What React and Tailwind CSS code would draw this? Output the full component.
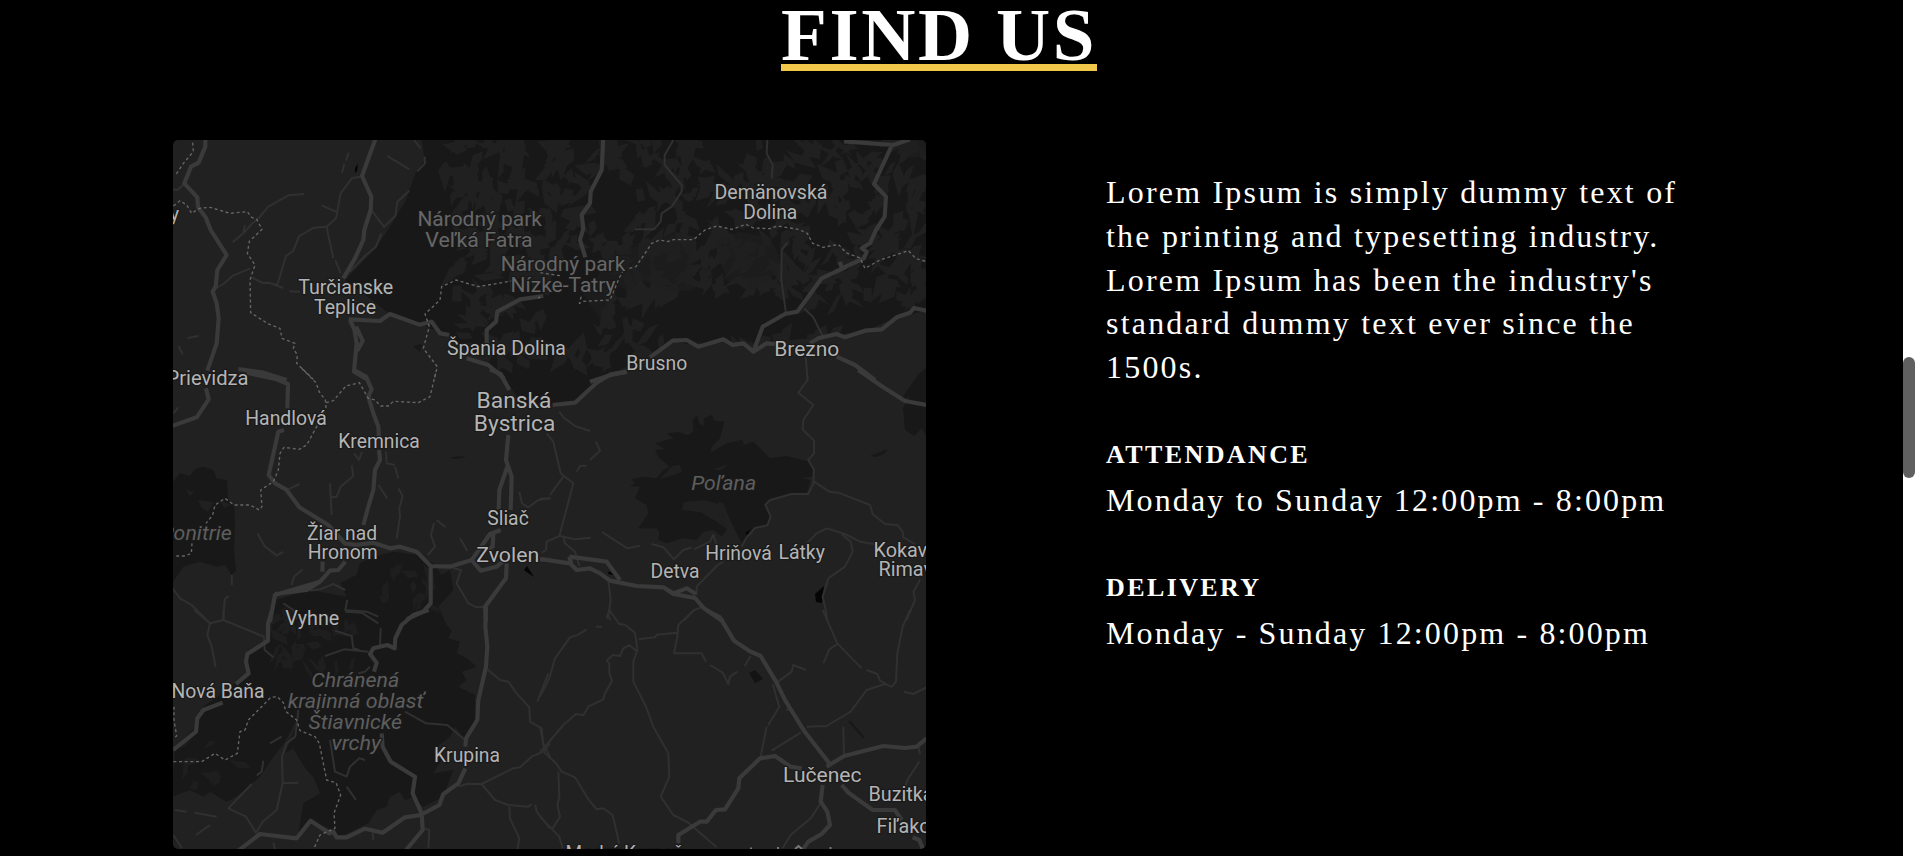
const SERIF = "font-['Liberation_Serif',serif]";

// Each tile is a 3x drawing grid placed at its own map origin.
const TILES = [
  {
    x: 160,
    y: 130,
    major: [
      "M136 20L136 50L116 98L93 110L73 160L112 202L114 232L137 262L152 300L200 375L172 420L167 470L158 485L170 520L176 565L170 640L142 722",
      "M647 25L606 138L634 200L632 240L613 300L610 330L585 385L550 445",
      "M1150 498L1080 508L1012 545L1008 575L980 600L980 640",
      "M566 568L660 573L690 552L778 584L815 575L840 610L868 615",
      "M570 570L583 598L590 640L582 725L622 748M588 590L608 632L592 662",
      "M920 685L985 705L1032 745",
      "M235 717L310 728L380 750",
    ],
    minor: [
      "M600 140L575 145L542 190L528 265L500 290L462 293L418 318L400 362L378 378L352 465L325 458L308 459L275 442",
      "M158 480L190 462L220 436L270 416",
      "M432 192L385 196L325 230L300 260L272 285L255 305L218 337M255 285L250 310",
      "M485 226L528 245M500 290L508 330L520 385M526 390L542 430",
      "M634 240L672 290L706 258L712 215L748 182M664 310L648 350L618 375L570 425",
      "M682 78L748 118M762 30L782 55M794 80L795 100L772 124M566 68L558 92M553 102L546 128",
      "M38 178L52 180L72 163M82 625L116 617M56 648L68 674M388 484L420 485M340 464L370 474",
    ],
    border: [
      "M98 38L100 65L72 98L46 136",
      "M40 228L60 212L80 225L95 250L118 235L150 232L210 250L262 245L275 262L290 268L306 298L268 334L262 370L285 405L270 450L272 548L325 582L360 595L366 625L405 640L400 655L412 675L410 700L460 748",
      "M1060 452L955 470L888 450L845 470L840 510L795 552L808 590L790 655L832 710L822 750",
    ],
  },
  {
    x: 540,
    y: 130,
    major: [
      "M190 20L185 120L152 185L150 220L125 255L130 295L120 330L136 382",
      "M912 34L1060 45L1110 28M1056 45L1002 162L1038 200L1034 260L1008 300L990 340L965 355L980 365L972 385L905 415L900 395M920 410L845 445L805 500L772 545L735 552L668 590L640 665",
      "M150 755L220 733L260 726M330 682L398 632L440 630L475 650L550 628L578 645L610 640L640 665L680 640L708 642",
      "M810 640L835 625L890 612L915 622L975 602L1025 598L1070 562L1110 548L1122 534L1160 542",
      "M890 680L945 705L1005 750",
    ],
    minor: [
      "M400 30L374 75L374 105L425 165L425 185L395 230L365 250L362 275L342 298L284 298",
      "M682 30L680 70L698 105L695 145",
      "M742 338L725 360L724 450L738 550M792 535L820 562L848 618M797 680L803 750",
    ],
    border: [
      "M-5 505L0 500M60 437L0 428M268 415L288 410L335 340L360 330L382 335L400 329L460 329L495 300L530 288L575 298L618 283L640 294L690 296L712 288L775 298L802 310L818 340L850 352L895 343L918 368L960 384L975 415L1020 390L1105 362L1128 386L1160 395",
      "M250 420L235 450L210 510L130 514L118 520L125 495",
    ],
  },
  {
    x: 160,
    y: 370,
    major: [
      "M260 8L350 28L384 42L382 115M372 180L355 185L326 315L345 340L378 358L418 412L505 465L555 520L590 525",
      "M138 55L146 88L110 142L36 168",
      "M582 0L618 20L635 58L625 80L640 130L655 170L657 205M657 240L660 270L645 300L640 360L625 410L610 465",
      "M990 -2L1022 12L1048 60M1045 195L1038 270L1055 320L1052 420M1042 290L1018 360L1016 418",
      "M590 525L640 518L690 535L720 530L770 545L812 588L870 590L935 570M812 588L812 700L790 725L740 748",
      "M1022 480L990 492L935 570L962 602L1010 590L1028 575M1000 490L998 530L980 540M1040 580L1038 625L975 710L978 755",
      "M556 575L535 600L510 602L480 635L345 675L330 755M345 672L440 660L480 635M488 575L487 605",
      "M1140 568L1172 570",
    ],
    minor: [
      "M582 250L597 270L606 245M678 245L680 280L705 285M705 290L715 325M575 285L580 318L542 350L530 380L512 382M510 340L515 435",
      "M655 345L682 385M715 355L728 378L718 415L720 440L710 505M385 358L418 342M292 490L315 530L350 556L370 546",
      "M822 460L813 495L825 530L803 555M830 450L857 472M900 505L922 543M1078 365L1086 400L1105 412L1135 390L1170 385",
      "M428 598L402 620L395 645M880 595L903 600L890 640L925 700L950 712L978 710",
      "M450 662L480 658L520 642L556 660M562 690L556 720L620 725L655 740M370 700L400 720L410 748M215 615L216 645M206 678L194 688L190 750M38 655L60 685L95 705L145 755M40 130L55 112",
    ],
    border: [
      "M425 -5L468 38L478 66L496 90L498 112L470 170L440 225L418 238L372 232L360 250L355 300L340 335L302 360L306 410L298 420L270 405L222 405L195 385L165 405L158 435L138 460",
      "M498 98L520 92L558 48L598 38L625 85L645 90L662 108L685 108L700 94L775 98L810 80L828 5",
      "M96 520L94 550L75 558L42 558",
    ],
  },
  {
    x: 540,
    y: 370,
    major: [
      "M260 5L210 14L170 38L105 98L38 105",
      "M955 0L1030 52L1095 93L1160 105",
      "M0 567L90 580L110 600L150 595L180 610L210 632L290 648L370 652L400 672L465 684L492 715L550 755M88 560L200 575L240 630M88 560L95 585M370 652L400 670L440 655L468 672",
    ],
    minor: [
      "M800 0L803 30L775 68L820 105L790 150L788 178L822 212L822 250L805 270L822 300L820 340L805 372L755 372L690 390L676 404L692 440L682 466L645 474L618 505L605 530",
      "M822 335L868 365L895 368L990 405L998 432L1035 462L1072 465L1088 485L1090 502L1125 522",
      "M800 520L830 490L860 475L915 492L960 515L1002 522M905 492L932 515L938 545L915 590L865 625L848 680L855 710L862 750",
      "M20 190L40 215L62 310L100 340L58 498L20 515L18 540L5 548M70 320L30 375M0 386L32 385M70 500L75 520L105 545L118 588M60 498L105 508L152 503",
      "M58 125L70 142L105 168L150 183M168 215L180 242L150 270M140 287L120 288L110 305",
      "M186 486L262 535L300 527M335 522L370 532L402 568L430 540L455 532M462 538L510 515L520 495L530 525M550 575L530 588L470 650L470 675",
      "M205 630L212 690L205 740L212 750M485 712L462 720L432 752M1140 630L1120 665L1125 690L1100 750",
    ],
    border: [],
  },
  {
    x: 160,
    y: 610,
    major: [
      "M336 0L324 42L324 92L262 132L258 155L266 190L228 222M188 278L130 300L112 325L108 365L40 420",
      "M978 -10L976 50L982 110L978 170L955 270L952 330L918 385L916 410M916 475L895 520L850 552L838 585L782 615L735 622L668 668L615 656L560 682L530 682L520 665L508 670L452 632L410 685L300 672L235 722",
      "M806 0L760 15L725 45L706 85L704 115L682 105L640 115L630 132L650 158L642 185",
      "M665 370L668 410L692 455L765 500L758 550L785 610L788 660L738 720",
    ],
    minor: [
      "M103 0L150 40L190 30L312 80L314 120L340 142M190 0L190 30M150 40L142 75L155 110L167 172",
      "M982 178L1020 210L1045 215L1070 250L1108 292L1110 335L1145 355L1150 400L1170 440M1170 250M1165 190L1132 275",
      "M1170 400L1150 425L1115 440L1080 472L1060 475L965 522L920 522L895 530M965 522L1005 570L1045 585L1105 590L1115 582M1048 590L1050 625L1078 685L1072 718M1126 584L1130 605L1170 655",
      "M735 305L798 340L862 345L915 390M415 300L406 380L380 400L366 440L368 520L350 600L308 635L288 668L258 620L205 595L275 522M368 520L415 518",
      "M310 452L305 485L290 496M330 400L365 380M45 600L80 605M104 608L170 620M150 645L108 675M40 675L66 715M340 698L345 718M638 668L640 690M790 655L808 660L805 715",
      "M495 138L552 118L625 125M525 62L575 78L580 115L598 120M662 55L660 105M556 5L605 8L655 40M595 190L615 185L630 170M510 390L525 485L560 500L570 470L598 445L615 450M560 530L588 570",
    ],
    border: [
      "M42 290L42 330L50 378L40 385M40 455L125 455L165 430L195 450L232 430L240 365L255 360L265 330L320 275L332 262L352 260L370 278L378 305L410 330L420 362L465 380L478 400L500 510L528 518L542 555L522 610L525 655L480 675L462 715",
    ],
  },
  {
    x: 540,
    y: 610,
    major: [
      "M498 0L540 22L582 92L632 125L662 138L708 215L735 270L792 362L872 465",
      "M860 470L912 438L1030 408L1095 414L1130 410L1160 385",
      "M415 700L415 675L480 635L500 635L528 600L555 598L595 535L598 505L660 445L705 438L752 470L785 476",
      "M848 525L842 575L862 605L870 645L845 672L805 695L788 720M905 525L925 548L998 600L1065 600L1085 630M1118 682L1138 690L1148 715",
    ],
    minor: [
      "M200 25L208 0L238 42L255 44L285 68L292 120L280 155L280 215L318 290L340 350L385 430L388 500L362 560L400 615L445 638L530 712",
      "M292 125L268 105L250 115L240 138L218 135L200 152L208 160L208 190L216 212L195 250L190 268L145 290L130 316L108 312L70 345L15 410L0 425",
      "M140 58L115 74L90 82L45 145L28 205L0 260M168 50L186 50M295 88L345 82L350 74L412 68",
      "M462 0L415 45L412 80L402 130L485 130L498 155M510 165L548 188L565 222L570 200L592 185M632 138L614 168",
      "M710 218L755 185L760 165L798 180M698 222L718 290L685 345M680 350L662 440M738 300L755 298M782 368L695 422M800 350L860 348L932 305L980 240L1035 222L1055 230L1068 215L1072 130L1088 50L1110 0",
      "M848 0L892 100L965 175M892 102L868 118L850 160M980 180L1012 192L1020 212L1038 222M1092 245L1120 252L1160 232M910 350L912 438M1135 410L1140 432M1138 455L1105 505L1095 530",
      "M0 350L15 430L48 460L65 485L105 502L145 568L170 598L190 595L218 615L238 702M55 485L58 560L52 585L60 620L38 655M0 620L58 680L68 715",
      "M840 582L812 625L752 675L728 715",
    ],
    border: [],
  },
];

const NORTH =
  "M421 138L425 160L415 174L406 200L393 222L376 248L345 280L372 300L392 316L423 325L450 338L487 362L508 383L520 402L553 405L576 402L600 378L650 357L673 341L698 346L723 340L753 351L780 341L820 337L865 331L895 318L928 310L928 138Z";
const POLANA =
  "M458 150L470 135L478 160L490 170L492 145L515 135L525 152L553 155L540 205L515 230L512 248L560 220L605 210L612 222L590 232L640 215L690 265L740 258L810 275L820 295L815 320L785 325L812 330L800 370L755 370L690 390L675 405L690 440L680 465L640 475L620 500L605 520L590 490L570 450L550 400L535 395L548 440L560 480L545 500L520 480L490 485L470 510L430 505L380 520L355 510L358 485L350 475L295 475L325 430L320 405L285 385L300 350L270 348L285 340L275 328L310 320L350 325L370 300L390 290L355 262L345 240L375 238L345 220L400 205L380 190L415 186L445 195L460 185Z";
const SOUTH =
  "M345 -30L330 90L265 130L260 190L200 240L130 290L110 350L45 410L36 560L90 540L130 560L150 545L200 575L230 560L300 500L340 440L372 400L405 340L420 310L400 370L375 430L400 415L420 450L440 480L460 500L480 550L430 580L415 670L450 630L520 660L540 680L625 640L650 600L680 590L690 560L720 545L735 570L760 560L790 590L850 560L880 480L820 490L850 440L830 410L870 380L885 350L912 385L945 330L945 255L895 230L920 210L905 185L950 170L920 145L890 130L900 95L865 85L875 60L860 45L835 -10L880 -60L870 -120L845 -105L820 -140L770 -165L700 -175L640 -160L600 -140L590 -105L540 -80L560 -40L450 -60Z";
const PONITRIE =
  "M60 310L90 318L105 298L130 290L160 300L170 325L200 330L205 390L222 410L225 450L222 545L228 600L215 615L195 585L170 590L120 575L70 590L36 640L36 340Z";

// Small deterministic generator for the relief facets inside the forests.
function facets(count, seed, x0, y0, w, h, size, skip) {
  let s = seed;
  const rnd = () => {
    s = (s * 1664525 + 1013904223) % 4294967296;
    return s / 4294967296;
  };
  let d = "";
  for (let i = 0; i < count; i++) {
    const x = x0 + rnd() * w;
    const y = y0 + rnd() * h;
    const a = (rnd() > 0.4 ? -1.05 : 0.65) + (rnd() - 0.5) * 1.1;
    const len = (6 + rnd() * 9) * size;
    const wid = (2.5 + rnd() * 4.5) * size;
    const k = rnd() - 0.5;
    if (skip(x, y)) continue;
    const c = Math.cos(a);
    const n = Math.sin(a);
    const p = (u, v) => (x + u * c - v * n).toFixed(1) + " " + (y + u * n + v * c).toFixed(1);
    d += `M${p(-len, 0)}L${p(len * k, wid)}L${p(len, k * 4)}L${p(len * 0.4, -wid)}L${p(-len * 0.3, -wid * 0.5)}Z`;
  }
  return d;
}

const inOval = (x, y, cx, cy, rx, ry) => ((x - cx) / rx) ** 2 + ((y - cy) / ry) ** 2 < 1;
const NORTH_FACETS = facets(760, 11, 440, 138, 486, 225, 1.15, (x, y) =>
  x < 440 + (y - 138) * 0.05 ||
  inOval(x, y, 712, 322, 75, 26) ||
  inOval(x, y, 612, 205, 26, 34) ||
  inOval(x, y, 575, 300, 30, 46) ||
  inOval(x, y, 725, 150, 26, 22) ||
  inOval(x, y, 850, 320, 70, 16) ||
  (x < 450 && y > 235)
);
const SOUTH_FACETS =
  facets(32, 5, 265, 610, 90, 60, 0.9, () => false) +
  facets(10, 7, 180, 740, 60, 50, 0.8, () => false) +
  facets(14, 9, 380, 570, 55, 40, 0.8, () => false);

const LABELS = [
  ["y", 179, 221.4, 19.8, 0, "end"],
  ["Turčianske", 345.7, 294, 19.8, 95],
  ["Teplice", 345, 313.7, 19.8, 62],
  ["Demänovská", 771, 199.4, 19.8, 113],
  ["Dolina", 770.3, 219, 19.8, 54],
  ["Špania Dolina", 506.5, 355, 19.8, 119],
  ["Brusno", 656.7, 369.6, 19.8, 61],
  ["Brezno", 806.7, 356.2, 21, 65],
  ["Prievidza", 248.5, 384.6, 20, 82, "end"],
  ["Handlová", 286, 424.6, 19.8, 81.5],
  ["Kremnica", 379, 448.2, 19.8, 81.5],
  ["Banská", 514, 408.2, 22.5, 75],
  ["Bystrica", 514.5, 431.2, 22.5, 81.5],
  ["Sliač", 508, 525.4, 19.8, 41.5],
  ["Zvolen", 507.7, 562.4, 20.8, 63],
  ["Žiar nad", 342, 539.6, 19.8, 70],
  ["Hronom", 342.7, 559.2, 19.8, 70],
  ["Hriňová", 738.5, 559.6, 19.8, 66.5],
  ["Látky", 801.7, 558.6, 19.8, 46.5],
  ["Detva", 675, 577.6, 19.8, 49],
  ["Kokava", 873.5, 557, 19.8, 0, "start"],
  ["Rimavicou", 878.5, 576.4, 19.8, 0, "start"],
  ["Vyhne", 312.3, 625.4, 19.8, 54],
  ["Nová Baňa", 218, 698.4, 19.8, 93],
  ["Krupina", 467, 761.6, 19.8, 66],
  ["Lučenec", 822.3, 782, 21, 78.5],
  ["Buzitka", 868.5, 800.8, 19.8, 0, "start"],
  ["Fiľakovo", 876.5, 833.4, 19.8, 0, "start"],
  ["Modrý Kameň", 565.5, 860, 19.5, 118, "start"],
];

const PARKS = [
  ["Národný park", 479.7, 225.8, 20.2, 124.5],
  ["Veľká Fatra", 479, 247, 20.2, 107.5],
  ["Národný park", 563, 271, 20.2, 124.5],
  ["Nízke-Tatry", 563, 292, 20.2, 105],
];

const RESERVES = [
  ["Ponitrie", 231.7, 539.7, 20, 71, "end"],
  ["Poľana", 723.7, 490.4, 20, 65],
  ["Chránená", 355.3, 687.3, 20.5, 88],
  ["krajinná oblasť", 355.7, 708.3, 20.5, 136],
  ["Štiavnické", 355.3, 729.3, 20.5, 93.5],
  ["vrchy", 356.3, 750.3, 20.5, 49.5],
];

function Labels({ items, className }) {
  return (
    <g className={className} stroke="#1a1a1a" strokeWidth="2.5" strokeLinejoin="round" paintOrder="stroke">
      {items.map(([text, x, y, size, width, anchor = "middle"]) => (
        <text
          key={text + y}
          x={x}
          y={y}
          fontSize={size}
          textAnchor={anchor}
          textLength={width || undefined}
          lengthAdjust="spacingAndGlyphs"
        >
          {text}
        </text>
      ))}
    </g>
  );
}

function RegionMap() {
  return (
    <svg viewBox="173 140 753 709" className="block h-[709px] w-[753px] shrink-0 rounded-[5px] bg-[#212121] font-[Roboto,sans-serif]">
      <defs>
        <clipPath id="north">
          <path d={NORTH} />
        </clipPath>
        <clipPath id="south">
          <path d={SOUTH} transform="translate(160 610) scale(.33333)" />
        </clipPath>
      </defs>
      <g fill="#181818">
        <path d={NORTH} />
        <path d="M928 366L918 375L906 392L901 400L910 396L903 408L905 430L914 436L922 428L928 439Z" />
        <path d={POLANA} transform="translate(540 370) scale(.33333)" />
        <path d={PONITRIE} transform="translate(160 370) scale(.33333)" />
        <path d={SOUTH} transform="translate(160 610) scale(.33333)" />
        <path d="M870 456L880 452L888 449L884 454L876 457ZM449 458L458 456L466 457L456 459ZM413 346L422 344L420 352Z" />
        <path d="M849 721L857 730L864 738L858 731Z" stroke="#181818" strokeWidth="2" />
      </g>
      <g fill="#202020">
        <path d={NORTH_FACETS} clipPath="url(#north)" />
        <path
          d="M583 292L598 276L612 254L640 245L680 232L694 240L690 270L695 290L672 292L660 286L640 280L628 292L618 285L610 300L600 318L590 305ZM714 240L740 232L770 238L782 262L770 280L752 290L738 276L728 282L720 262ZM899 144L926 140L926 156L912 158L900 152Z"
          opacity=".6"
        />
        <path d={SOUTH_FACETS} clipPath="url(#south)" opacity=".8" />
        <path d="M660 479L672 466L680 465L682 472L670 476ZM684 502L705 500L722 505L728 530L714 520L700 512L682 510ZM712 470L728 464L722 470Z" />
        <path d="M186 490L194 492L190 496ZM198 500L214 502L208 512L202 508ZM220 500L231 505L224 508Z" />
      </g>
      <g fill="#050505">
        <path d="M355 168L358 164L357 171L355 173ZM524 570L527 566L534 577L528 573ZM815 594L824 586L822 603L816 602ZM745 533L751 529L747 535ZM609 571L614 575L608 574Z" />
        <path d="M749 673L755 670L763 679L755 683Z" fill="#131313" />
      </g>
      {TILES.map((t) => (
        <g key={`${t.x}-${t.y}`} transform={`translate(${t.x} ${t.y}) scale(.33333)`} fill="none" strokeLinejoin="round">
          <path d={t.minor.join("")} stroke="#303030" strokeWidth="6" />
          <path d={t.major.join("")} stroke="#3a3a3a" strokeWidth="12.5" />
          <path d={t.border.join("")} stroke="#666" strokeWidth="4" strokeDasharray="9 8" />
        </g>
      ))}
      <path d="M795 849L798.500 846L802 849M751 849V847.500M778 849V847M830.500 849V847" fill="none" stroke="#777" strokeWidth="2" />
      <Labels items={PARKS} className="fill-[#676767]" />
      <Labels items={RESERVES} className="fill-[#5e5e5e] italic" />
      <Labels items={LABELS} className="fill-[#b4b4b4]" />
    </svg>
  );
}

function Hours({ title, children }) {
  return (
    <div>
      <h2 className="text-[26px] leading-[31px] font-bold tracking-[2.4px]">{title}</h2>
      <p className="mt-[8px] leading-[44px] tracking-[2.14px]">{children}</p>
    </div>
  );
}

export default function App() {
  return (
    <div className="flex h-[856px] w-full overflow-hidden bg-black">
      <main className={`flex flex-1 flex-col text-white ${SERIF}`}>
        <header className="flex h-[140px] shrink-0 pl-[781px]">
          <h1 className="h-[71px] w-[316px] border-b-[7px] border-[#f2c84b] text-[75px] leading-[69px] font-bold tracking-[2.6px] whitespace-nowrap">
            FIND US
          </h1>
        </header>
        <section className="flex pl-[173px]">
          <RegionMap />
          <div className="ml-[180px] flex w-[600px] flex-col pt-[31px] text-[32px] tracking-[2.2px]">
            <p className="leading-[43.750px]">
              Lorem Ipsum is simply dummy text of
              <br />
              the printing and typesetting industry.
              <br />
              Lorem Ipsum has been the industry's
              <br />
              standard dummy text ever since the
              <br />
              1500s.
            </p>
            <div className="mt-[49px] flex flex-col gap-[50px]">
              <Hours title="ATTENDANCE">Monday to Sunday 12:00pm - 8:00pm</Hours>
              <Hours title="DELIVERY">Monday - Sunday 12:00pm - 8:00pm</Hours>
            </div>
          </div>
        </section>
      </main>
      <div className="w-3 shrink-0 bg-white pt-[357px]">
        <div className="h-[121px] rounded-full bg-[#606060]" />
      </div>
    </div>
  );
}
